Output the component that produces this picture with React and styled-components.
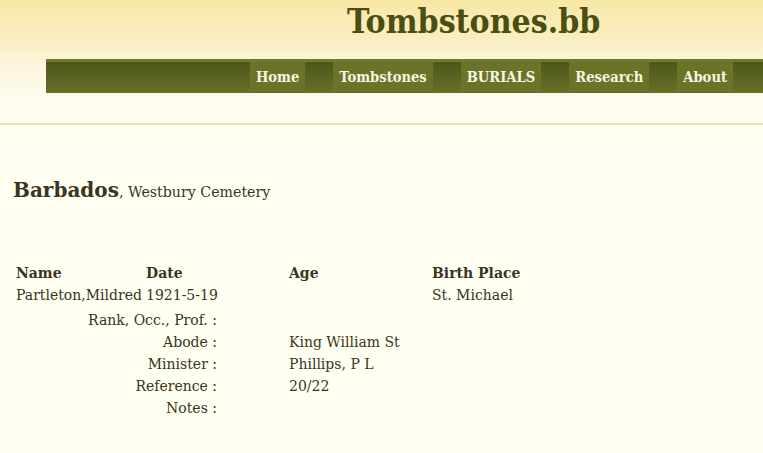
import React from "react";
import styled, { createGlobalStyle } from "styled-components";

const GlobalStyle = createGlobalStyle`
  html, body { margin: 0; padding: 0; }
  body {
    background: #fffff2;
    color: #3a3420;
    font-family: "DejaVu Serif", "Liberation Serif", serif;
  }
`;

const Header = styled.header`
  height: 125px;
  background: linear-gradient(180deg, #f8e7a4 0%, #f9eebf 30%, #fcf6df 55%, #fefbef 80%);
  border-bottom: 2px solid #efe0a0;
  padding-top: 4px;
  box-sizing: border-box;
`;

const Title = styled.h1`
  margin: 0 0 0 347px;
  height: 55px;
  font-family: "DejaVu Serif Condensed", "DejaVu Serif", serif;
  font-stretch: condensed;
  font-weight: bold;
  font-size: 33.5px;
  line-height: 36px;
  color: #4a4e12;
`;

const NavBar = styled.nav`
  margin-left: 46px;
  height: 34px;
  box-sizing: border-box;
  border-top: 3px solid #6f7a2e;
  background: linear-gradient(180deg, #4e571b 0%, #5a6320 50%, #67702a 100%);
  display: flex;
  justify-content: flex-end;
  gap: 28px;
  padding-right: 30px;
  align-items: flex-start;
`;

const NavItem = styled.a`
  display: flex;
  align-items: center;
  height: 29px;
  padding: 0 6px;
  background: #6b7329;
  color: #f7f5e4;
  font-family: "DejaVu Serif Condensed", "DejaVu Serif", serif;
  font-stretch: condensed;
  font-weight: bold;
  font-size: 14.6px;
  text-decoration: none;
`;

const Main = styled.main`
  padding: 53px 0 0 13px;
`;

const Heading = styled.div`
  font-size: 14.2px;
  line-height: 24px;
`;

const Country = styled.span`
  font-weight: bold;
  font-size: 20px;
`;

const Table = styled.div`
  display: grid;
  grid-template-columns: 130px 143px 143px 200px;
  margin: 58px 0 0 3px;
  font-size: 14px;
`;

const HeadCell = styled.div`
  font-weight: bold;
  height: 22px;
  line-height: 23px;
`;

const Cell = styled.div`
  height: ${(p) => (p.$tall ? 25 : 22)}px;
  line-height: 22px;
  white-space: nowrap;
`;

const Label = styled.div`
  grid-column: 1 / span 2;
  text-align: right;
  padding-right: 72px;
  height: 22px;
  line-height: 22px;
  white-space: nowrap;
`;

const Value = styled.div`
  grid-column: 3 / span 2;
  height: 22px;
  line-height: 22px;
`;

const details = [
  ["Rank, Occ., Prof. :", ""],
  ["Abode :", "King William St"],
  ["Minister :", "Phillips, P L"],
  ["Reference :", "20/22"],
  ["Notes :", ""],
];

export default function App() {
  return (
    <>
      <GlobalStyle />
      <Header>
        <Title>Tombstones.bb</Title>
        <NavBar>
          <NavItem href="#">Home</NavItem>
          <NavItem href="#">Tombstones</NavItem>
          <NavItem href="#">BURIALS</NavItem>
          <NavItem href="#">Research</NavItem>
          <NavItem href="#">About</NavItem>
        </NavBar>
      </Header>
      <Main>
        <Heading>
          <Country>Barbados</Country>, Westbury Cemetery
        </Heading>
        <Table>
          <HeadCell>Name</HeadCell>
          <HeadCell>Date</HeadCell>
          <HeadCell>Age</HeadCell>
          <HeadCell>Birth Place</HeadCell>
          <Cell $tall>Partleton,Mildred</Cell>
          <Cell $tall>1921-5-19</Cell>
          <Cell $tall></Cell>
          <Cell $tall>St. Michael</Cell>
          {details.map(([l, v]) => (
            <React.Fragment key={l}>
              <Label>{l}</Label>
              <Value>{v}</Value>
            </React.Fragment>
          ))}
        </Table>
      </Main>
    </>
  );
}
